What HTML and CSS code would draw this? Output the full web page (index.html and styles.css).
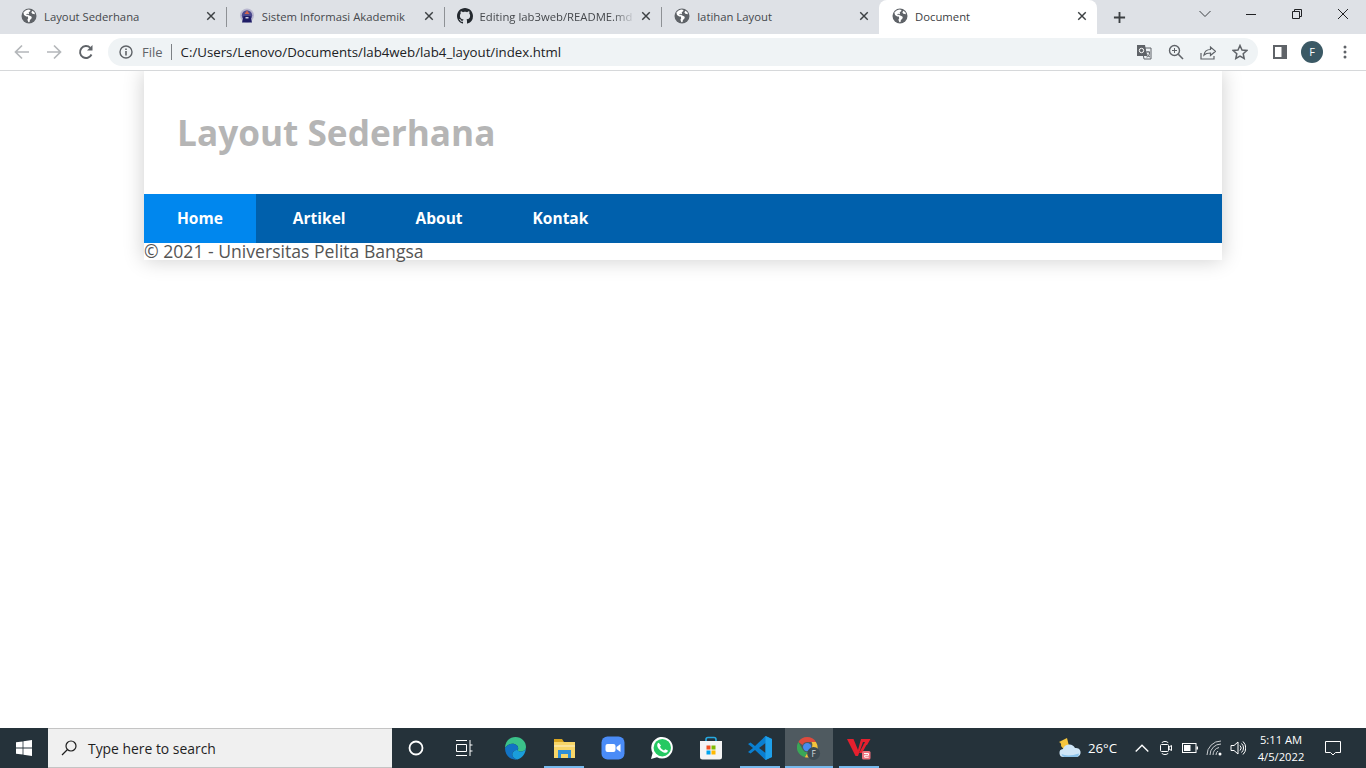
FILE: index.html
```html
<!DOCTYPE html>
<html lang="en">
<head>
    <meta charset="UTF-8">
    <title>Document</title>
    <link rel="stylesheet" href="styles.css">
</head>
<body>
    <svg class="defs">
        <symbol id="globe" viewBox="0 0 16 16">
            <circle cx="8" cy="8" r="7.5" fill="#5f6368"/>
            <path d="M7.2 1.6 4.6 2.400 2.400 4.600 3 7l2.200 1.400 1.600.2.4 1.600-.8 1.600 1 2.400 1.200-.2.2-1.800 2-2.200-.4-1.600-2.200-.8-1.400-.8-1.200.2-.2-.9 1.200-.3.8.5.6-.3-.3-1.700 1.400-1.100.4-1.100zM11.200 2.800l-.8 1.600 1 1.400 2.600.4-.6-2z" fill="#fff"/>
        </symbol>
        <symbol id="close" viewBox="0 0 12 12">
            <path d="M1.500 1.500l9 9M10.500 1.500l-9 9" stroke="#3c4043" stroke-width="1.700" fill="none"/>
        </symbol>
    </svg>

    <div class="tabs">
        <div class="tab first">
            <svg class="favicon"><use href="#globe"/></svg>
            <span class="tab-title">Layout Sederhana</span>
            <svg class="tab-close"><use href="#close"/></svg>
        </div>
        <div class="tab">
            <svg class="favicon" viewBox="0 0 16 16">
                <circle cx="8" cy="7.500" r="7" fill="#b9b7cf"/>
                <circle cx="8" cy="7.500" r="5.200" fill="#4c4a8f"/>
                <path d="M8 2.500 10.500 6h-5z" fill="#d0644f"/>
                <path d="M3 14.500 4.500 8h7L13 14.500z" fill="#1f1d66"/>
                <path d="M6.500 9h3v1.500h-3z" fill="#cfd0e4"/>
            </svg>
            <span class="tab-title">Sistem Informasi Akademik</span>
            <svg class="tab-close"><use href="#close"/></svg>
        </div>
        <div class="tab">
            <svg class="favicon" viewBox="0 0 16 16">
                <path fill="#24292f" d="M8 0C3.580 0 0 3.580 0 8c0 3.540 2.290 6.530 5.470 7.590.4.070.55-.17.55-.38 0-.19-.01-.82-.01-1.490-2.010.37-2.530-.49-2.690-.94-.09-.23-.48-.94-.82-1.130-.28-.15-.68-.52-.01-.53.63-.01 1.080.58 1.230.82.72 1.210 1.870.87 2.330.66.07-.52.28-.87.51-1.070-1.780-.2-3.640-.89-3.640-3.950 0-.87.31-1.590.82-2.150-.08-.2-.36-1.020.08-2.120 0 0 .67-.21 2.200.82.64-.18 1.320-.27 2-.27s1.360.09 2 .27c1.530-1.040 2.200-.82 2.200-.82.44 1.100.16 1.920.08 2.120.51.56.82 1.270.82 2.150 0 3.070-1.870 3.750-3.650 3.950.29.25.54.73.54 1.480 0 1.070-.01 1.930-.01 2.200 0 .21.15.46.55.38A8.010 8.010 0 0 0 16 8c0-4.420-3.580-8-8-8z"/>
            </svg>
            <span class="tab-title fade">Editing lab3web/README.md</span>
            <svg class="tab-close"><use href="#close"/></svg>
        </div>
        <div class="tab">
            <svg class="favicon"><use href="#globe"/></svg>
            <span class="tab-title">latihan Layout</span>
            <svg class="tab-close"><use href="#close"/></svg>
        </div>
        <div class="tab active">
            <svg class="favicon"><use href="#globe"/></svg>
            <span class="tab-title">Document</span>
            <svg class="tab-close"><use href="#close"/></svg>
        </div>
        <svg class="new-tab" viewBox="0 0 14 14"><path d="M7 1v12M1 7h12" stroke="#3c4043" stroke-width="2" fill="none"/></svg>
        <div class="win-controls">
            <svg class="win-btn" viewBox="0 0 46 20"><path d="M17.500 7l5.500 5.500L28.500 7" stroke="#3c4043" fill="none"/></svg>
            <svg class="win-btn" viewBox="0 0 46 20"><path d="M18 10.500h10" stroke="#202124" fill="none"/></svg>
            <svg class="win-btn" viewBox="0 0 46 20"><path d="M18.500 7.500h7v7h-7zM20.500 7.500v-2h7v7h-2" stroke="#202124" fill="none"/></svg>
            <svg class="win-btn" viewBox="0 0 46 20"><path d="M18 5l10 10M28 5L18 15" stroke="#202124" fill="none"/></svg>
        </div>
    </div>

    <div class="toolbar">
        <svg class="nav-btn" viewBox="0 0 16 16"><path d="M15 8H2M8 1.500 1.500 8 8 14.500" stroke="#b4b7ba" stroke-width="1.700" fill="none"/></svg>
        <svg class="nav-btn" viewBox="0 0 16 16"><path d="M1 8h13M8 1.500 14.500 8 8 14.500" stroke="#b4b7ba" stroke-width="1.700" fill="none"/></svg>
        <svg class="nav-btn" viewBox="0 0 16 16"><path d="M13.500 10.500A6 6 0 1 1 12.300 3.800" stroke="#5f6368" stroke-width="1.900" fill="none"/><path d="M14.500 1v5.600H9z" fill="#5f6368"/></svg>
        <div class="omnibox">
            <svg class="info" viewBox="0 0 14 14"><circle cx="7" cy="7" r="6" stroke="#5f6368" stroke-width="1.400" fill="none"/><path d="M6.200 6h1.600v4.500H6.200zM6.200 3.400h1.600V5H6.200z" fill="#5f6368"/></svg>
            <span class="scheme">File</span>
            <span class="url">C:/Users/Lenovo/Documents/lab4web/lab4_layout/index.html</span>
            <div class="omni-icons">
                <svg class="omni-icon" viewBox="0 0 16 16"><path d="M6 4h9v11H8z" fill="#eff3f5" stroke="#5f6368"/><path d="M1 1h8l2.200 11H1z" fill="#5f6368"/><circle cx="5.500" cy="6.500" r="2.200" stroke="#fff" fill="none"/><path d="M10 8h4M12 7v1M10.500 13c2 0 3-2 3-5M10.500 9.500c.5 1.500 2 2.800 3.500 3.500" stroke="#5f6368" fill="none"/></svg>
                <svg class="omni-icon" viewBox="0 0 16 16"><circle cx="6.500" cy="6.500" r="5" stroke="#5f6368" stroke-width="1.400" fill="none"/><path d="M10.300 10.300 15 15" stroke="#5f6368" stroke-width="1.600"/><path d="M4 6.500h5M6.500 4v5" stroke="#5f6368" fill="none"/></svg>
                <svg class="omni-icon" viewBox="0 0 16 16"><path d="M1 9v6h13v-3" stroke="#5f6368" stroke-width="1.200" fill="none"/><path d="M4 11c.5-3.500 3-5.500 6.500-5.500V3l5 4.300-5 4.200V9C7.500 9 5.500 9.500 4 11z" stroke="#5f6368" stroke-width="1.200" fill="none"/></svg>
                <svg class="omni-icon" viewBox="0 0 16 16"><path d="M8 1.500l2 4.500 4.800.5-3.600 3.200 1 4.800L8 12.100l-4.200 2.400 1-4.800L1.200 6.500 6 6z" stroke="#5f6368" stroke-width="1.500" fill="none"/></svg>
            </div>
        </div>
        <svg class="side-panel" viewBox="0 0 14 14"><path d="M0 0h14v14H0z" fill="#5f6368"/><path d="M2 2h6.500v10H2z" fill="#fff"/></svg>
        <div class="avatar">F</div>
        <svg class="menu" viewBox="0 0 4 14"><circle cx="2" cy="2" r="1.500" fill="#5f6368"/><circle cx="2" cy="7" r="1.500" fill="#5f6368"/><circle cx="2" cy="12" r="1.500" fill="#5f6368"/></svg>
    </div>

    <div class="viewport">
        <div class="container">
            <header class="site-header">
                <h1>Layout Sederhana</h1>
            </header>
            <nav class="site-nav">
                <a href="#" class="active">Home</a>
                <a href="#">Artikel</a>
                <a href="#">About</a>
                <a href="#">Kontak</a>
            </nav>
            <footer class="site-footer">&copy; 2021 - Universitas Pelita Bangsa</footer>
        </div>
    </div>

    <div class="taskbar">
        <div class="start">
            <svg viewBox="0 0 16 16" class="start-logo"><path d="M0 2.300 6.600 1.400v6.200H0zM7.400 1.300 16 0v7.600H7.400zM0 8.400h6.600v6.200L0 13.700zM7.400 8.400H16V16l-8.600-1.300z" fill="#fff"/></svg>
        </div>
        <div class="search">
            <svg class="search-icon" viewBox="0 0 16 16"><circle cx="10" cy="6" r="5" stroke="#1f1f1f" stroke-width="1.200" fill="none"/><path d="M6.500 9.500 1 15" stroke="#1f1f1f" stroke-width="1.300"/></svg>
            <span>Type here to search</span>
        </div>
        <div class="task-slot system"><svg class="cortana" viewBox="0 0 16 16"><circle cx="8" cy="8" r="6.500" stroke="#fff" stroke-width="1.800" fill="none"/></svg></div>
        <div class="task-slot system"><svg class="taskview" viewBox="0 0 18 18"><path d="M1 1.500h11M1 16.500h11M1.500 5.500h10v7h-10zM15 1v16M15 6h2.500M15 12h2.500" stroke="#fff" fill="none"/></svg></div>

        <div class="task-slot app first-app"><svg viewBox="0 0 24 24">
            <path d="M2 12C2 5 7 1 12.500 1 18.500 1 23 5.500 23 11c0 3-2.500 4.500-5 4.500-2 0-3.500-.6-3.500-1.500 1-1 1-3-.5-4.500C11 7 5.500 7 2 12z" fill="#3bc28a"/>
            <path d="M2 12C5.500 7 11 7 14 9.500c1.500 1.500 1.500 3.500.5 4.500-2.500 0-6 2-5 5.500.5 2 2.500 3.500 5 4-7 1-12.500-4-12.500-11.500z" fill="#1273c4"/>
            <path d="M14.500 14c0 .9 1.500 1.500 3.500 1.500 2.500 0 5-1.500 5-4.500 0 6-3.500 11-8.500 12.500-2.500-.5-4.500-2-5-4-1-3.500 2.500-5.500 5-5.500z" fill="#1a9ddb"/>
        </svg></div>
        <div class="task-slot app running"><svg viewBox="0 0 24 24">
            <path d="M2 3h8l2 3H2z" fill="#d9a520"/>
            <path d="M2 6h21v16H2z" fill="#f8d668"/>
            <path d="M6 14h13v8h-3v-4H9v4H6z" fill="#2f8fd8"/>
            <path d="M2 9h21v2H2z" fill="#fbe49a"/>
        </svg></div>
        <div class="task-slot app"><svg viewBox="0 0 24 24">
            <rect x="0.500" y="0.500" width="23" height="23" rx="6" fill="#4a8cf7"/>
            <rect x="4.500" y="8" width="10" height="8" rx="2" fill="#fff"/>
            <path d="M15.500 11 19.500 8v8l-4-3z" fill="#fff"/>
        </svg></div>
        <div class="task-slot app"><svg viewBox="0 0 24 24">
            <path d="M1 23l1.600-6A10.800 10.800 0 1 1 7 21.300z" fill="#fff"/>
            <circle cx="12.300" cy="11.700" r="8.700" fill="#25c962"/>
            <path d="M8.700 6.800c-.5 0-1.500.8-1.500 2.500 0 2 1.500 4 3.500 5.500s4 2.300 5.200 2c1-.2 2-1.200 2-2.200l-2.700-1.400-1.200 1.300c-1.800-.8-3.200-2-4-3.800l1-1.200z" fill="#fff"/>
        </svg></div>
        <div class="task-slot app"><svg viewBox="0 0 24 24">
            <path d="M7 6V3.500C7 2 8 1.500 9 1.500h6c1 0 2 .5 2 2V6" stroke="#27a9e0" stroke-width="1.600" fill="none"/>
            <path d="M1 5h22v16a2.500 2.500 0 0 1-2.500 2.500h-17A2.500 2.500 0 0 1 1 21z" fill="#f4f4f4"/>
            <path d="M7.500 9.500h4v4h-4z" fill="#f25022"/><path d="M12.500 9.500h4v4h-4z" fill="#7fba00"/>
            <path d="M7.500 14.500h4v4h-4z" fill="#00a4ef"/><path d="M12.500 14.500h4v4h-4z" fill="#ffb900"/>
        </svg></div>
        <div class="task-slot app running"><svg viewBox="0 0 24 24">
            <path d="M17.500 0 24 3v18l-6.500 3L7 14l-4.500 3.500L0 16l5-4-5-4 2.500-1.500L7 10z" fill="#0a7fd0"/>
            <path d="M17.500 7 11 12l6.500 5z" fill="#2a353c"/>
            <path d="M17.500 0 24 3v18l-6.500 3z" fill="#1ea0ea"/>
        </svg></div>
        <div class="task-slot app running current">
            <svg viewBox="0 0 26 26">
                <path d="M1.500 6.500A11 11 0 0 1 20.500 6.500H11a5.500 5.500 0 0 0-5 3.200z" fill="#dd4b3e"/>
                <path d="M1.500 6.500 6.300 14.800a5.500 5.500 0 0 0 5.200 2.700L8.500 23A11 11 0 0 1 1.500 6.500z" fill="#3aa757"/>
                <path d="M20.500 6.500A11 11 0 0 1 8.500 23l4.700-8.200A5.500 5.500 0 0 0 15.700 6.500z" fill="#f5c33b"/>
                <circle cx="11" cy="12" r="4.500" fill="#4a8cf0"/>
                <circle cx="18" cy="19" r="7" fill="#3d4a52"/>
                <text x="18" y="22.500" class="badge-letter">F</text>
            </svg>
        </div>
        <div class="task-slot app running"><svg viewBox="0 0 24 24">
            <path d="M0 3h6.500l4.500 11L14 3h9.500l-3.500 6h-3.500l1.500-3h-2L11 20H8.500z" fill="#e5202e"/>
            <path d="M12 17 17 8h3l-5 9z" fill="#e5202e"/>
            <rect x="15" y="15" width="8.500" height="8.500" rx="1.500" fill="#ee6f7a"/>
            <path d="M17 17.500h4.500v1.800h-3.800v1.900h4" stroke="#fff" fill="none"/>
        </svg></div>

        <div class="tray">
            <svg class="weather" viewBox="0 0 24 20">
                <path d="M9 0 1 4c2 1 2.500 2.500 2 4l2.500 3H12L10.500 6z" fill="#f5c53d"/>
                <path d="M6 19a4 4 0 0 1-1-8 6.500 6.500 0 0 1 12-1 4.600 4.600 0 0 1 2 9z" fill="#cfe6f7"/>
                <path d="M6 19a4 4 0 0 1-2.500-3c4 2 10 2 17.500-.5a4 4 0 0 1-2 3.500z" fill="#8cc3ea"/>
            </svg>
            <span class="temp">26°C</span>
            <svg class="tray-icon" viewBox="0 0 14 14"><path d="M1.500 10 7 4.500 12.500 10" stroke="#fff" stroke-width="1.200" fill="none"/></svg>
            <svg class="tray-icon" viewBox="0 0 14 16"><path d="M3 3c0-2 6-2 6 0M3 13c0 2 6 2 6 0" stroke="#fff" fill="none"/><rect x="1.500" y="4.500" width="8" height="7" rx="1" stroke="#fff" fill="none"/><path d="M10 7l2.500-1.500v5L10 9z" stroke="#fff" fill="none"/></svg>
            <svg class="tray-icon" viewBox="0 0 16 16"><rect x="0.500" y="3.500" width="13.500" height="9" stroke="#fff" fill="none"/><rect x="2" y="5" width="6.500" height="6" fill="#fff"/><path d="M14.500 6.500h1.500v3h-1.500z" fill="#fff"/></svg>
            <svg class="tray-icon" viewBox="0 0 16 16"><path d="M1 15A14 14 0 0 1 15 1M4 15A11 11 0 0 1 15 4M7 15a8 8 0 0 1 6-7.500M10 15a5 5 0 0 1 2-4" stroke="#c9cdd0" fill="none"/><circle cx="14" cy="14" r="1.500" fill="#fff"/></svg>
            <svg class="tray-icon" viewBox="0 0 16 16"><path d="M1 5.500h3L8 2v12l-4-3.500H1z" stroke="#fff" fill="none"/><path d="M10 5.500a3.500 3.500 0 0 1 0 5M11.500 3.500a6 6 0 0 1 0 9M13 1.500a9 9 0 0 1 0 13" stroke="#fff" fill="none"/></svg>
            <div class="clock"><span>5:11 AM</span><span>4/5/2022</span></div>
            <svg class="notify" viewBox="0 0 16 16"><path d="M.500 1.500h15v11h-5L8 15l-2.500-2.500h-5z" stroke="#fff" fill="none"/></svg>
        </div>
    </div>
</body>
</html>
```

FILE: styles.css
```css
/* page reset */
html, body {
    margin: 0;
    height: 100%;
    overflow: hidden;
}
body {
    display: flex;
    flex-direction: column;
    height: 768px;
    background-color: #fff;
    font-family: "Open Sans", "Noto Sans", sans-serif;
}
.defs {
    display: none;
}

/* tab strip */
.tabs {
    display: flex;
    align-items: center;
    height: 34px;
    padding-left: 8px;
    background-color: #dee1e6;
    flex-shrink: 0;
}
.tab {
    display: flex;
    align-items: center;
    box-sizing: border-box;
    width: 217.75px;
    height: 34px;
    padding: 0 10px 2px 12px;
    border-left: 1px solid #8e9195;
    border-image: linear-gradient(transparent 8px, #8e9195 8px, #8e9195 26px, transparent 26px) 1;
    font-size: 11.300px;
    color: #45484c;
}
.tab.first {
    border-left-color: transparent;
    border-image: none;
}
.tab.active {
    background-color: #fff;
    border-left-color: transparent;
    border-image: none;
    border-radius: 8px 8px 0 0;
    color: #3c4043;
}
.favicon {
    width: 16px;
    height: 16px;
    flex-shrink: 0;
}
.tab-title {
    flex: 1;
    margin-left: 7px;
    white-space: nowrap;
    overflow: hidden;
}
.fade {
    -webkit-mask-image: linear-gradient(to right, #000 85%, transparent 100%);
    mask-image: linear-gradient(to right, #000 85%, transparent 100%);
}
.tab-close {
    width: 10px;
    height: 10px;
    margin-left: 5px;
    flex-shrink: 0;
}
.new-tab {
    width: 13px;
    height: 13px;
    margin-left: 16px;
}
.win-controls {
    display: flex;
    margin-left: auto;
    align-self: flex-start;
    margin-top: 4px;
}
.win-btn {
    width: 46px;
    height: 20px;
}

/* toolbar */
.toolbar {
    display: flex;
    align-items: center;
    box-sizing: border-box;
    height: 37px;
    padding: 0 0 1px 14px;
    border-bottom: 1px solid #d6d8da;
    flex-shrink: 0;
}
.nav-btn {
    width: 16px;
    height: 16px;
    margin-right: 16px;
}
.omnibox {
    display: flex;
    align-items: center;
    box-sizing: border-box;
    width: 1150px;
    height: 28px;
    margin-left: -2px;
    padding: 0 0 0 11px;
    background-color: #eff3f5;
    border-radius: 14px;
}
.info {
    width: 14px;
    height: 14px;
}
.scheme {
    margin-left: 9px;
    padding-right: 8px;
    border-right: 1px solid #7d8185;
    font-size: 13px;
    line-height: 16px;
    color: #5f6368;
}
.url {
    margin-left: 9px;
    font-size: 13.250px;
    color: #202124;
}
.omni-icons {
    display: flex;
    gap: 16px;
    margin-left: auto;
    padding-right: 10px;
}
.omni-icon {
    width: 16px;
    height: 16px;
}
.side-panel {
    width: 14px;
    height: 14px;
    margin-left: 15px;
}
.avatar {
    width: 22px;
    height: 22px;
    margin-left: 14px;
    border-radius: 50%;
    background-color: #3b5965;
    color: #fff;
    font-size: 11px;
    line-height: 22px;
    text-align: center;
}
.menu {
    width: 4px;
    height: 14px;
    margin-left: 20px;
}

/* the page itself */
.viewport {
    flex: 1;
    overflow: hidden;
}
.container {
    width: 1078px;
    margin: 0 auto;
    box-shadow: 0 0 20px rgba(0, 0, 0, 0.2);
}
.site-header {
    height: 123px;
    box-sizing: border-box;
    padding: 38px 33px 0;
}
.site-header h1 {
    margin: 0;
    font-size: 35.200px;
    line-height: 46px;
    font-weight: 700;
    color: #b5b5b5;
}
.site-nav {
    display: flex;
    height: 49px;
    background-color: #0060ac;
}
.site-nav a {
    padding: 0 35px;
    line-height: 49px;
    font-size: 15.500px;
    font-weight: 700;
    color: #fff;
    text-decoration: none;
}
.site-nav a.active {
    padding: 0 33px;
    margin-right: 2px;
    background-color: #0087ee;
}
.site-footer {
    height: 17px;
    line-height: 17px;
    font-size: 17.600px;
    color: #555;
    background-color: #fff;
}

/* windows taskbar */
.taskbar {
    display: flex;
    align-items: stretch;
    height: 40px;
    background-color: #25323a;
    flex-shrink: 0;
}
.start {
    display: flex;
    align-items: center;
    justify-content: center;
    width: 48px;
}
.start-logo {
    width: 16px;
    height: 16px;
}
.search {
    display: flex;
    align-items: center;
    box-sizing: border-box;
    width: 344px;
    padding-left: 13px;
    background-color: #f0f0f0;
    border-top: 1px solid #c4c4c4;
    border-bottom: 1px solid #c4c4c4;
    font-size: 13.900px;
    color: #1f1f1f;
}
.search-icon {
    width: 16px;
    height: 16px;
    margin-right: 11px;
}
.task-slot {
    display: flex;
    align-items: center;
    justify-content: center;
    width: 49px;
}
.task-slot.system {
    width: 48px;
}
.cortana {
    width: 16px;
    height: 16px;
}
.taskview {
    width: 18px;
    height: 18px;
}
.first-app {
    margin-left: 2px;
}
.app svg {
    width: 24px;
    height: 24px;
}
.running {
    background: linear-gradient(#76b9ed, #76b9ed) center bottom / 40px 2px no-repeat;
}
.current {
    width: 48px;
    margin: 0 1px;
    background: linear-gradient(#76b9ed, #76b9ed) center bottom / 100% 2px no-repeat, #4f5a60;
}
.badge-letter {
    font-size: 9px;
    fill: #d8dcdf;
    text-anchor: middle;
}
.tray {
    display: flex;
    align-items: center;
    margin-left: auto;
    color: #fff;
}
.weather {
    width: 24px;
    height: 20px;
}
.temp {
    margin-left: 6px;
    width: 46px;
    font-size: 13.200px;
}
.tray-icon {
    width: 16px;
    height: 16px;
    margin-right: 8px;
}
.clock {
    display: flex;
    flex-direction: column;
    align-items: center;
    width: 54px;
    font-size: 11.200px;
    line-height: 17px;
}
.notify {
    width: 16px;
    height: 16px;
    margin: 0 25px 0 17px;
}
```
